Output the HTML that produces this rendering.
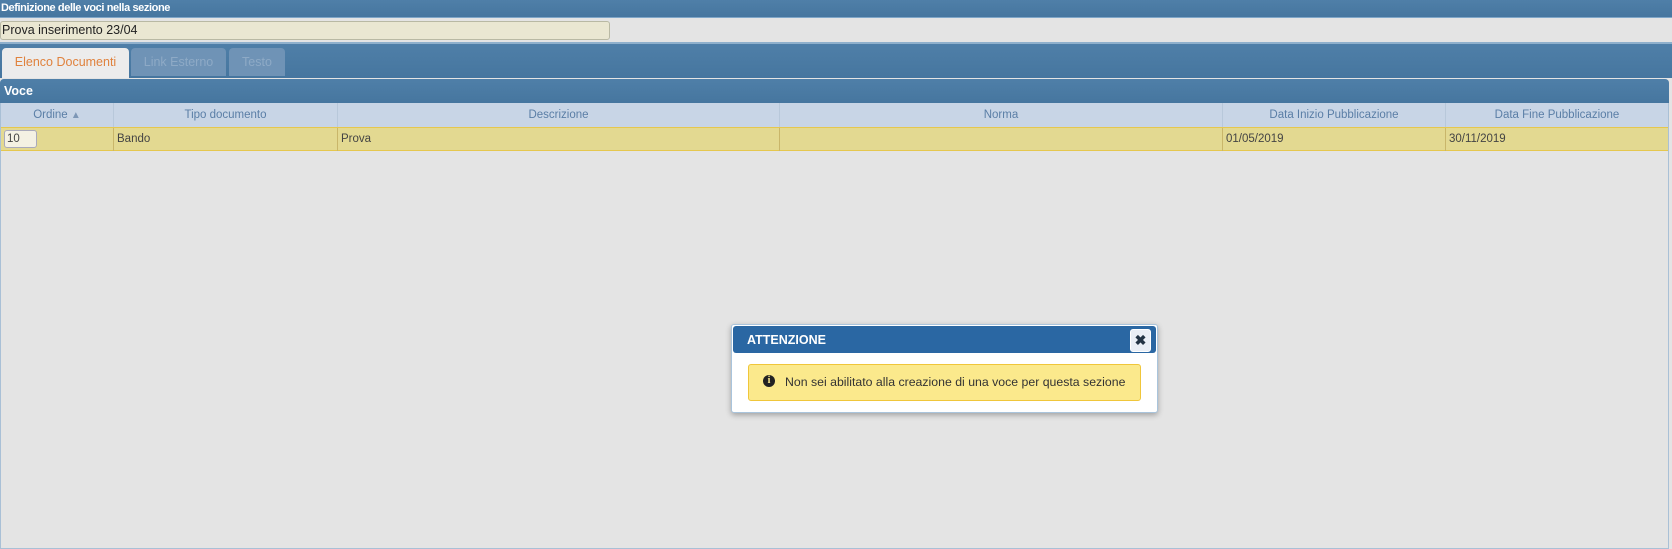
<!DOCTYPE html>
<html><head><meta charset="utf-8"><style>
*{box-sizing:border-box;margin:0;padding:0}
body{width:1672px;height:545px;overflow:hidden;background:#e4e4e4;font-family:"Liberation Sans",Arial,sans-serif;font-size:12px;color:#333;position:relative}
.blue{background:linear-gradient(180deg,#4f7fa8,#46769f)}
.abs{position:absolute}
.th{position:absolute;top:0;height:25px;line-height:25px;text-align:center;color:#5a7ea6;border-right:1px solid #b8c8da;font-size:11.5px}
.td{position:absolute;top:0;height:23px;line-height:23px;padding-left:3px;color:#444;border-right:1px solid #c9b66a;font-size:11.5px}
</style></head><body>
<div class="abs blue" style="left:0;top:0;width:1672px;height:18px;border-bottom:1px solid #7fa6c8"></div>
<div class="abs" style="left:1px;top:2px;color:#fff;font-size:11px;font-weight:bold;letter-spacing:-0.4px">Definizione delle voci nella sezione</div>
<div class="abs" style="left:0;top:21px;width:610px;height:19px;background:#eae7d2;border:1px solid #b9b9a4;border-radius:3px;line-height:17px;font-size:12.5px;color:#222;padding-left:1px">Prova inserimento 23/04</div>
<div class="abs blue" style="left:0;top:42px;width:1672px;height:36px;border-top:2px solid #8fb0cc"></div>
<div class="abs" style="left:2px;top:48px;width:127px;height:30px;background:#ececec;border-radius:4px 4px 0 0;color:#e0823d;font-size:12.5px;text-align:center;line-height:28px">Elenco Documenti</div>
<div class="abs" style="left:131px;top:48px;width:95px;height:28px;background:#6f93b6;border-radius:4px 4px 0 0;color:#8eaac6;font-size:12.5px;text-align:center;line-height:28px">Link Esterno</div>
<div class="abs" style="left:229px;top:48px;width:56px;height:28px;background:#6f93b6;border-radius:4px 4px 0 0;color:#8eaac6;font-size:12.5px;text-align:center;line-height:28px">Testo</div>
<div class="abs" style="left:0;top:79px;width:1669px;height:470px;border:1px solid #a9c0d6;border-radius:4px 4px 0 0;background:#e4e4e4"></div>
<div class="abs blue" style="left:0;top:79px;width:1669px;height:24px;border-radius:4px 4px 0 0"></div>
<div class="abs" style="left:4px;top:84px;color:#fff;font-weight:bold;font-size:12.5px">Voce</div>
<div class="abs" style="left:1px;top:103px;width:1667px;height:25px;background:#c8d5e6">
<div class="th" style="left:0;width:113px">Ordine <span style="color:#7d97b6;font-size:10px">&#9650;</span></div>
<div class="th" style="left:113px;width:224px">Tipo documento</div>
<div class="th" style="left:337px;width:442px">Descrizione</div>
<div class="th" style="left:779px;width:443px">Norma</div>
<div class="th" style="left:1222px;width:223px">Data Inizio Pubblicazione</div>
<div class="th" style="left:1445px;width:222px;border:none">Data Fine Pubblicazione</div>
</div>
<div class="abs" style="left:1px;top:127px;width:1667px;height:24px;background:#e3d991;border-top:1px solid #e5c74e;border-bottom:1px solid #e5c74e">
<div class="td" style="left:0;width:113px"><span style="display:inline-block;margin-top:2px;width:33px;height:18px;background:#f4f1e3;border:1px solid #aab;border-radius:3px;line-height:17px;padding-left:2px;vertical-align:top">10</span></div>
<div class="td" style="left:113px;width:224px">Bando</div>
<div class="td" style="left:337px;width:442px">Prova</div>
<div class="td" style="left:779px;width:443px"></div>
<div class="td" style="left:1222px;width:223px">01/05/2019</div>
<div class="td" style="left:1445px;width:222px;border:none">30/11/2019</div>
</div>
<div class="abs" style="left:731px;top:324px;width:427px;height:89px;background:#fff;border:1px solid #a9c4dc;border-radius:3px;box-shadow:0 2px 6px rgba(0,0,0,.3)"></div>
<div class="abs" style="left:733px;top:326px;width:423px;height:27px;background:#2a67a3;border-radius:3px"></div>
<div class="abs" style="left:747px;top:333px;color:#fff;font-weight:bold;font-size:12.5px">ATTENZIONE</div>
<div class="abs" style="left:1130px;top:329px;width:21px;height:23px;background:#e9eef5;border:1px solid #fff;border-radius:3px;color:#234;font-weight:bold;font-size:14px;text-align:center;line-height:21px">&#10006;</div>
<div class="abs" style="left:748px;top:364px;width:393px;height:37px;background:#fbe98c;border:1px solid #f0c63a;border-radius:3px"></div>
<div class="abs" style="left:763px;top:375px;width:12px;height:12px;border-radius:50%;background:#222;color:#fbe98c;font-size:10px;font-weight:bold;text-align:center;line-height:12px;font-family:'Liberation Serif',serif">i</div>
<div class="abs" style="left:785px;top:375px;font-size:12.3px;color:#333">Non sei abilitato alla creazione di una voce per questa sezione</div>
</body></html>
